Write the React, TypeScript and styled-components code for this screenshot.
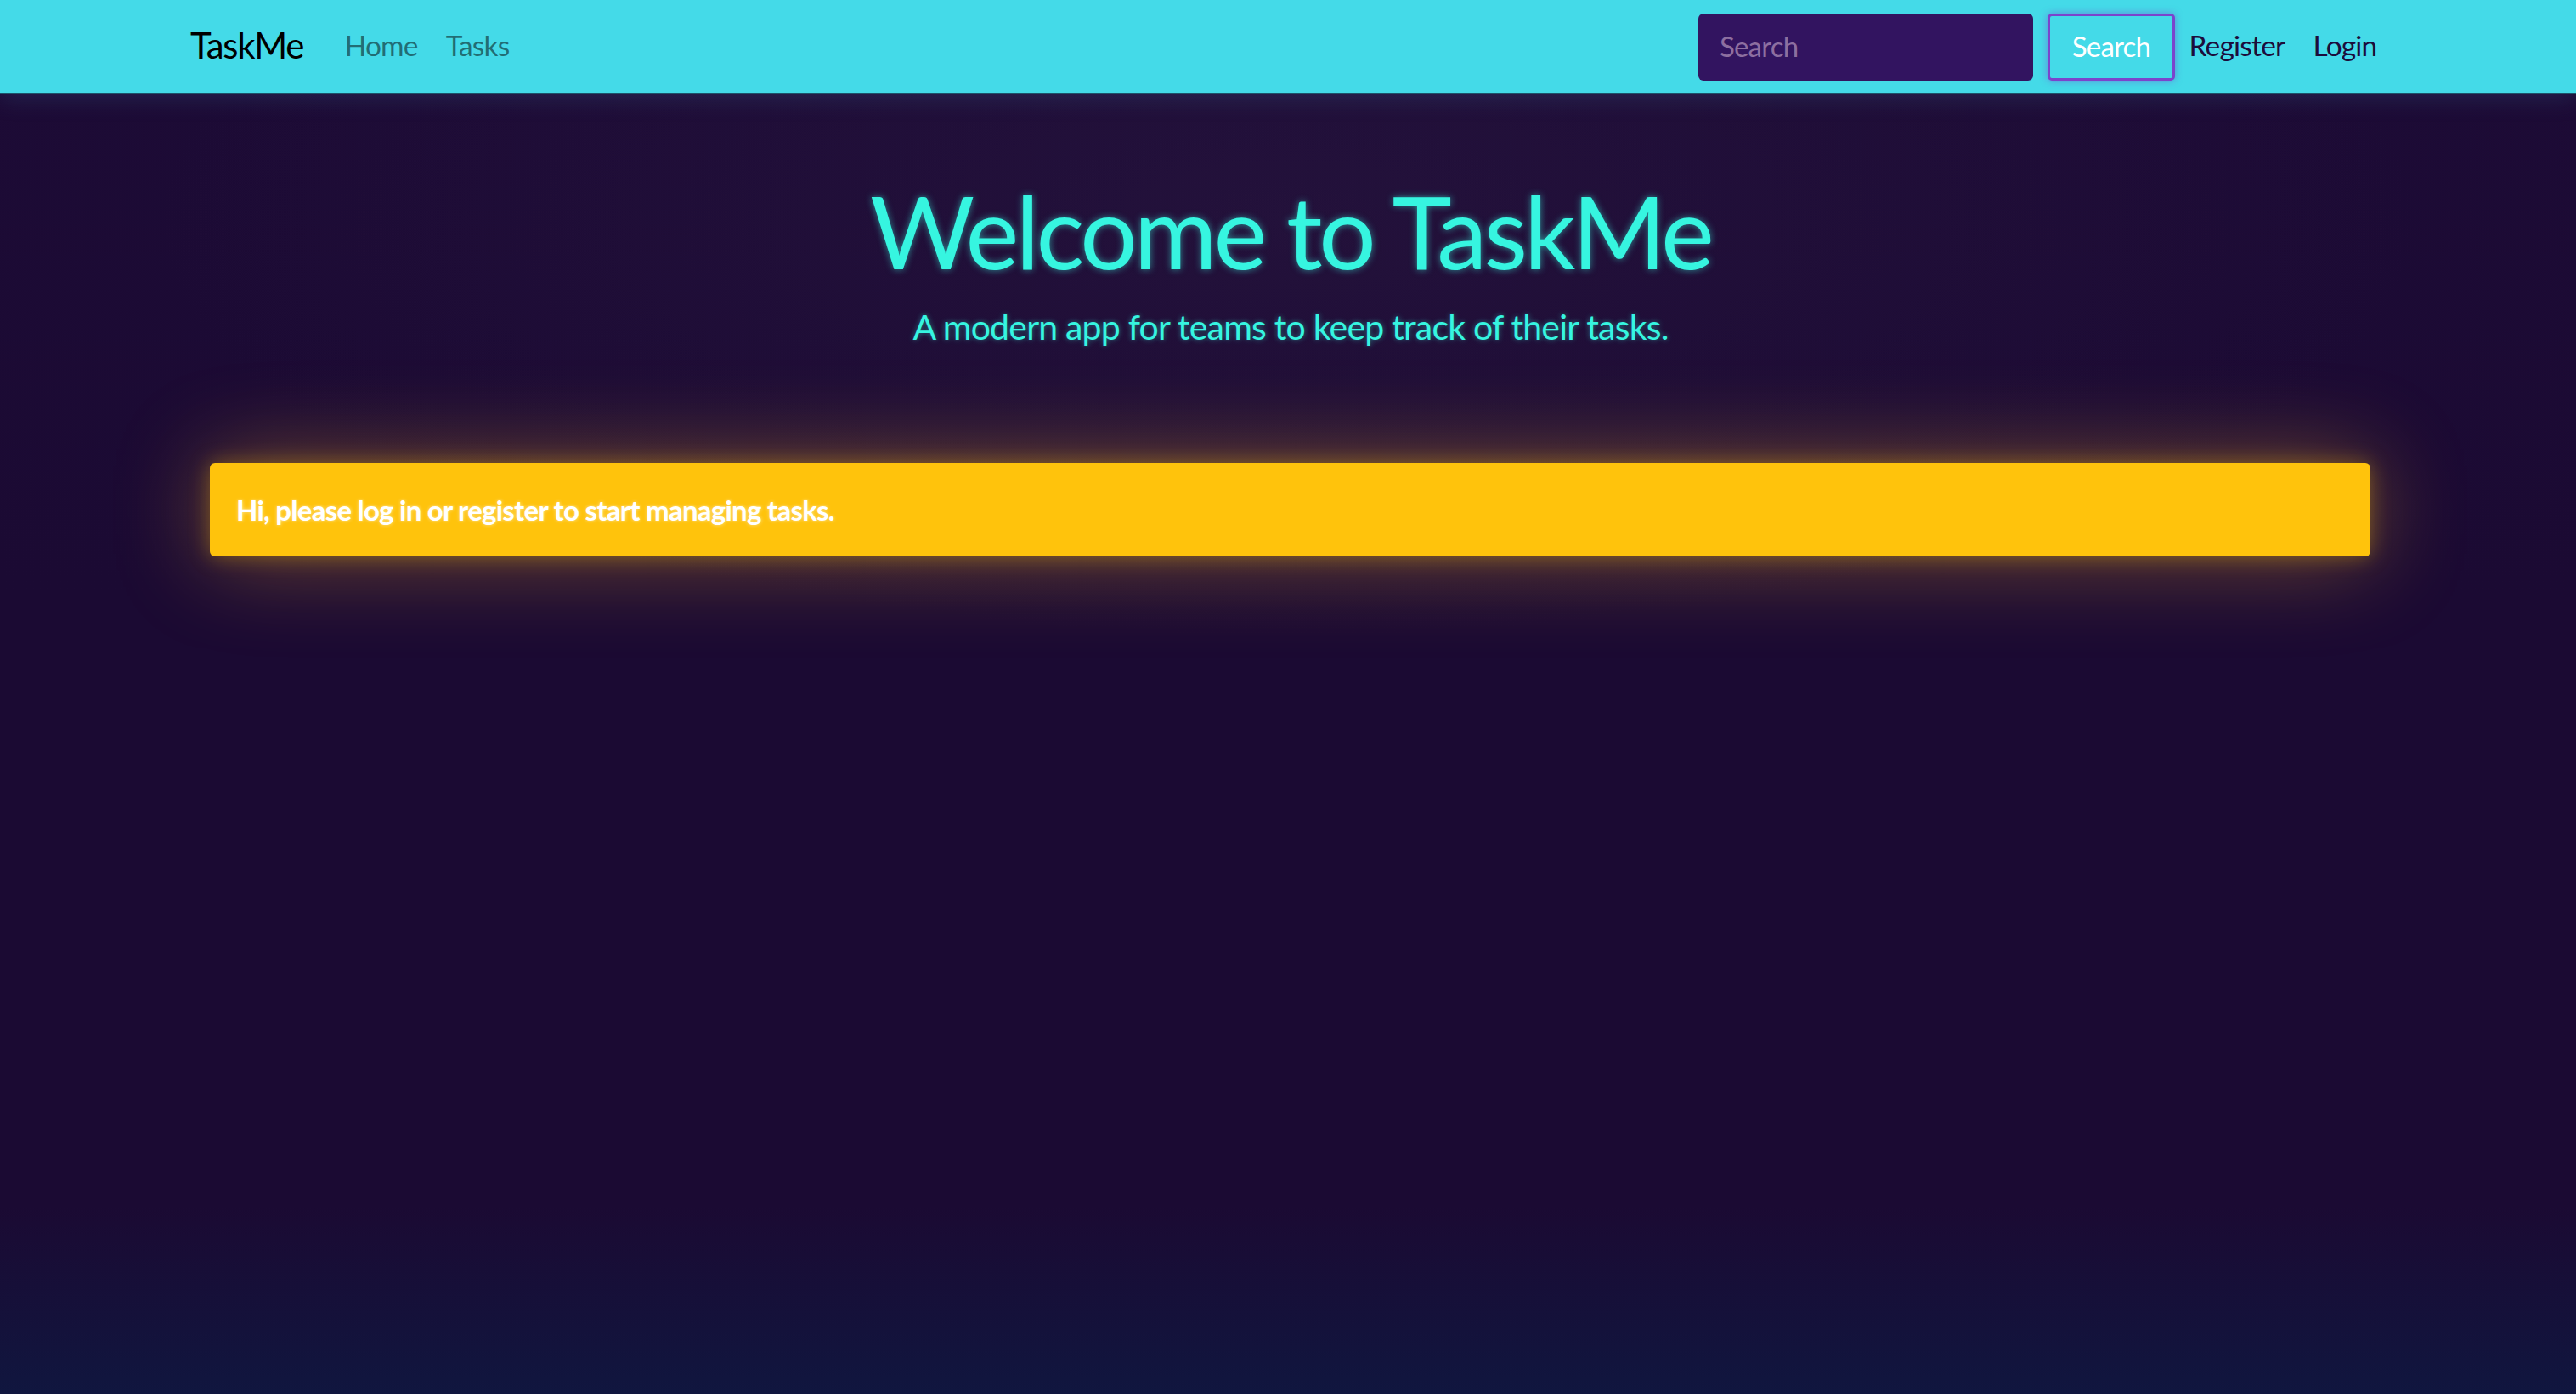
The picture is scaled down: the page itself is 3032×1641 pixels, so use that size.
import React from "react";
import styled, { createGlobalStyle } from "styled-components";

const GlobalStyle = createGlobalStyle`
  html, body {
    margin: 0;
    padding: 0;
  }
  body {
    font-family: Lato, "Open Sans", "Liberation Sans", sans-serif;
    background: #1b0a33;
    min-height: 100vh;
  }
  * { box-sizing: border-box; }
`;

const Page = styled.div`
  min-height: 1641px;
  display: flex;
  flex-direction: column;
  background:
    radial-gradient(ellipse 1900px 700px at 50% 260px, rgba(48, 30, 70, 0.35), rgba(27, 10, 51, 0) 70%),
    linear-gradient(to bottom, #1d0b36 0px, #1b0a33 700px, #1b0a33 1420px, #10163f 1641px);
`;

const NavBar = styled.nav`
  height: 110px;
  flex: none;
  display: flex;
  align-items: center;
  padding: 0 218px 3px 224px;
  background: #44dae8;
  box-shadow: 0 1px 0 rgba(30, 90, 110, 0.9), 0 6px 26px rgba(60, 120, 170, 0.22);
  position: relative;
  z-index: 1;
`;

const Brand = styled.a`
  font-size: 42px;
  line-height: 1.5;
  letter-spacing: -1.3px;
  color: #000;
  text-decoration: none;
  margin-right: 32px;
`;

const NavLinks = styled.div`
  display: flex;
  align-items: center;
`;

const NavLink = styled.a<{ $strong?: boolean }>`
  font-size: 33.5px;
  line-height: 1.5;
  letter-spacing: -0.8px;
  padding: 0 16.5px;
  text-decoration: none;
  color: ${(p) => (p.$strong ? "#1c0d3c" : "rgba(0, 0, 0, 0.5)")};
`;

const Spacer = styled.div`
  flex: 1;
`;

const SearchForm = styled.form`
  display: flex;
  align-items: center;
  gap: 17px;
  margin: 3px 0 0;
`;

const SearchInput = styled.input`
  width: 394px;
  height: 79px;
  border: none;
  border-radius: 6px;
  background: #321460;
  color: #fff;
  font-family: Lato, "Open Sans", sans-serif;
  font-size: 33px;
  letter-spacing: -0.8px;
  padding: 0 25px 3px;
  outline: none;
  &::placeholder {
    color: #8d6fa0;
  }
`;

const SearchButton = styled.button`
  width: 150px;
  height: 79px;
  border: 3.5px solid #7b44cc;
  border-radius: 5px;
  background: #44dae8;
  color: #fff;
  font-family: Lato, "Open Sans", sans-serif;
  font-size: 33px;
  letter-spacing: -0.8px;
  padding: 0 0 3px;
  box-shadow: 0 0 8px rgba(123, 68, 204, 0.55);
  cursor: pointer;
`;

const Hero = styled.header`
  display: flex;
  flex-direction: column;
  align-items: center;
  padding-top: 90px;
  padding-left: 6px;
`;

const Title = styled.h1`
  margin: 0;
  font-size: 119px;
  font-weight: 400;
  line-height: 1.2;
  letter-spacing: -4px;
  color: #36f5e0;
  text-shadow: 0 0 8px rgba(54, 245, 224, 0.55);
`;

const Lead = styled.p`
  margin: 11px 0 0;
  font-size: 41px;
  font-weight: 400;
  line-height: 1.5;
  letter-spacing: -0.8px;
  color: #36f5e0;
  text-shadow: 0 0 6px rgba(54, 245, 224, 0.45);
`;

const Main = styled.main`
  padding: 130px 242px 0 247px;
`;

const Alert = styled.div`
  height: 110px;
  display: flex;
  align-items: center;
  padding: 0 31px;
  border-radius: 6px;
  background: #ffc30c;
  box-shadow: 0 0 110px rgba(255, 180, 40, 0.42), 0 0 24px rgba(255, 193, 7, 0.35);
`;

const AlertText = styled.strong`
  font-size: 33px;
  font-weight: 700;
  line-height: 1.5;
  letter-spacing: -0.75px;
  color: #fff;
  text-shadow: 0 0 4px rgba(255, 255, 255, 0.55);
`;

export default function App() {
  return (
    <>
      <GlobalStyle />
      <Page>
        <NavBar>
          <Brand href="#">TaskMe</Brand>
          <NavLinks>
            <NavLink href="#">Home</NavLink>
            <NavLink href="#">Tasks</NavLink>
          </NavLinks>
          <Spacer />
          <SearchForm onSubmit={(e) => e.preventDefault()}>
            <SearchInput placeholder="Search" />
            <SearchButton type="submit">Search</SearchButton>
          </SearchForm>
          <NavLinks>
            <NavLink $strong href="#">Register</NavLink>
            <NavLink $strong href="#">Login</NavLink>
          </NavLinks>
        </NavBar>
        <Hero>
          <Title>Welcome to TaskMe</Title>
          <Lead>A modern app for teams to keep track of their tasks.</Lead>
        </Hero>
        <Main>
          <Alert>
            <AlertText>Hi, please log in or register to start managing tasks.</AlertText>
          </Alert>
        </Main>
      </Page>
    </>
  );
}
